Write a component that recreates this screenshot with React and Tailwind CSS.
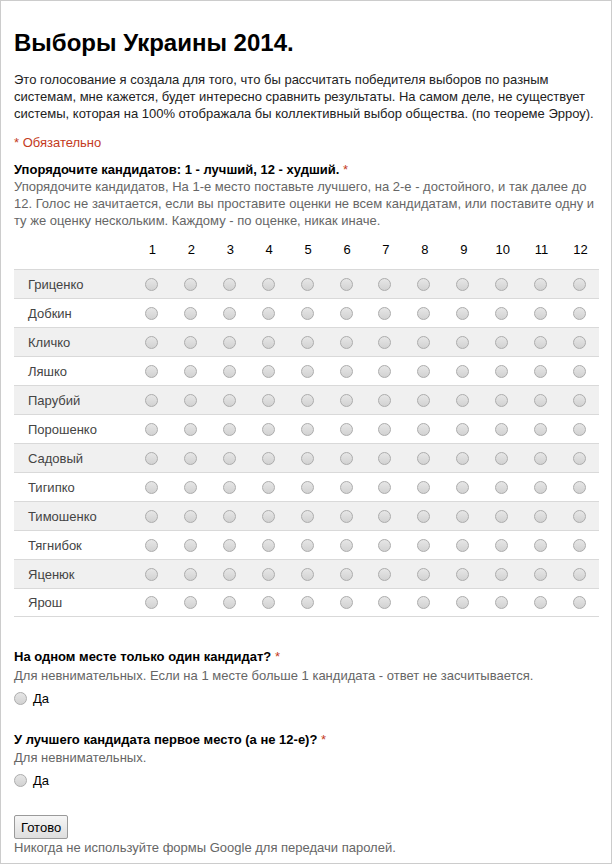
const CANDIDATES = [
  'Гриценко', 'Добкин', 'Кличко', 'Ляшко', 'Парубий', 'Порошенко',
  'Садовый', 'Тигипко', 'Тимошенко', 'Тягнибок', 'Яценюк', 'Ярош',
];
const COLS = [1, 2, 3, 4, 5, 6, 7, 8, 9, 10, 11, 12];

function Radio() {
  return (
    <span className="block w-[13px] h-[13px] rounded-full border border-[#acacac] bg-gradient-to-b from-[#e6e6e6] to-[#d2d2d2]" />
  );
}

export default function App() {
  return (
    <div className="w-[612px] h-[864px] border border-[#cccccc] bg-white pl-[13px] pr-[14px] pt-[28px] text-[13px] leading-[17px] text-[#222] font-['Liberation_Sans',Arial,sans-serif]">
      <h1 className="text-[24px] leading-[28px] font-bold text-black">Выборы Украины 2014.</h1>
      <p className="mt-[14px]">
        Это голосование я создала для того, что бы рассчитать победителя выборов по разным системам, мне кажется, будет интересно сравнить результаты. На самом деле, не существует системы, которая на 100% отображала бы коллективный выбор общества. (по теореме Эрроу).
      </p>
      <div className="mt-[12px] text-[#c43b1d]">* Обязательно</div>

      <div className="mt-[10px] font-bold text-black">
        Упорядочите кандидатов: 1 - лучший, 12 - худший. <span className="font-normal text-[#c43b1d]">*</span>
      </div>
      <div className="text-[#666]">
        Упорядочите кандидатов, На 1-е место поставьте лучшего, на 2-е - достойного, и так далее до 12. Голос не зачитается, если вы проставите оценки не всем кандидатам, или поставите одну и ту же оценку нескольким. Каждому - по оценке, никак иначе.
      </div>

      <div className="mt-[12px] w-[585px]">
        <div className="grid grid-cols-[118px_repeat(12,1fr)] h-[28px] text-black">
          <div />
          {COLS.map((c) => (
            <div key={c} className="text-center pl-[2px]">{c}</div>
          ))}
        </div>
        {CANDIDATES.map((name, i) => (
          <div
            key={name}
            className={`grid grid-cols-[118px_repeat(12,1fr)] h-[29px] items-center border-t border-[#d9d9d9] ${
              i % 2 === 0 ? 'bg-[#f0f0f0]' : 'bg-white'
            } ${i === CANDIDATES.length - 1 ? 'border-b' : ''}`}
          >
            <div className="pl-[14px] text-[#444]">{name}</div>
            {COLS.map((c) => (
              <div key={c} className="flex justify-center">
                <Radio />
              </div>
            ))}
          </div>
        ))}
      </div>

      <div className="mt-[31px] font-bold text-black">
        На одном месте только один кандидат? <span className="font-normal text-[#c43b1d]">*</span>
      </div>
      <div className="mt-[2px] text-[#666]">Для невнимательных. Если на 1 месте больше 1 кандидата - ответ не засчитывается.</div>
      <label className="mt-[6px] flex items-center gap-[6px] text-black">
        <Radio />
        <span>Да</span>
      </label>

      <div className="mt-[24px] font-bold text-black">
        У лучшего кандидата первое место (а не 12-е)? <span className="font-normal text-[#c43b1d]">*</span>
      </div>
      <div className="mt-[1px] text-[#666]">Для невнимательных.</div>
      <label className="mt-[6px] flex items-center gap-[6px] text-black">
        <Radio />
        <span>Да</span>
      </label>

      <button
        type="button"
        className="mt-[26px] block h-[24px] px-[6px] border border-[#9a9a9a] rounded-[2px] bg-gradient-to-b from-[#f6f6f6] to-[#dedede] text-black text-[13px] leading-[17px]"
      >
        Готово
      </button>
      <div className="text-[#666]">Никогда не используйте формы Google для передачи паролей.</div>
    </div>
  );
}
